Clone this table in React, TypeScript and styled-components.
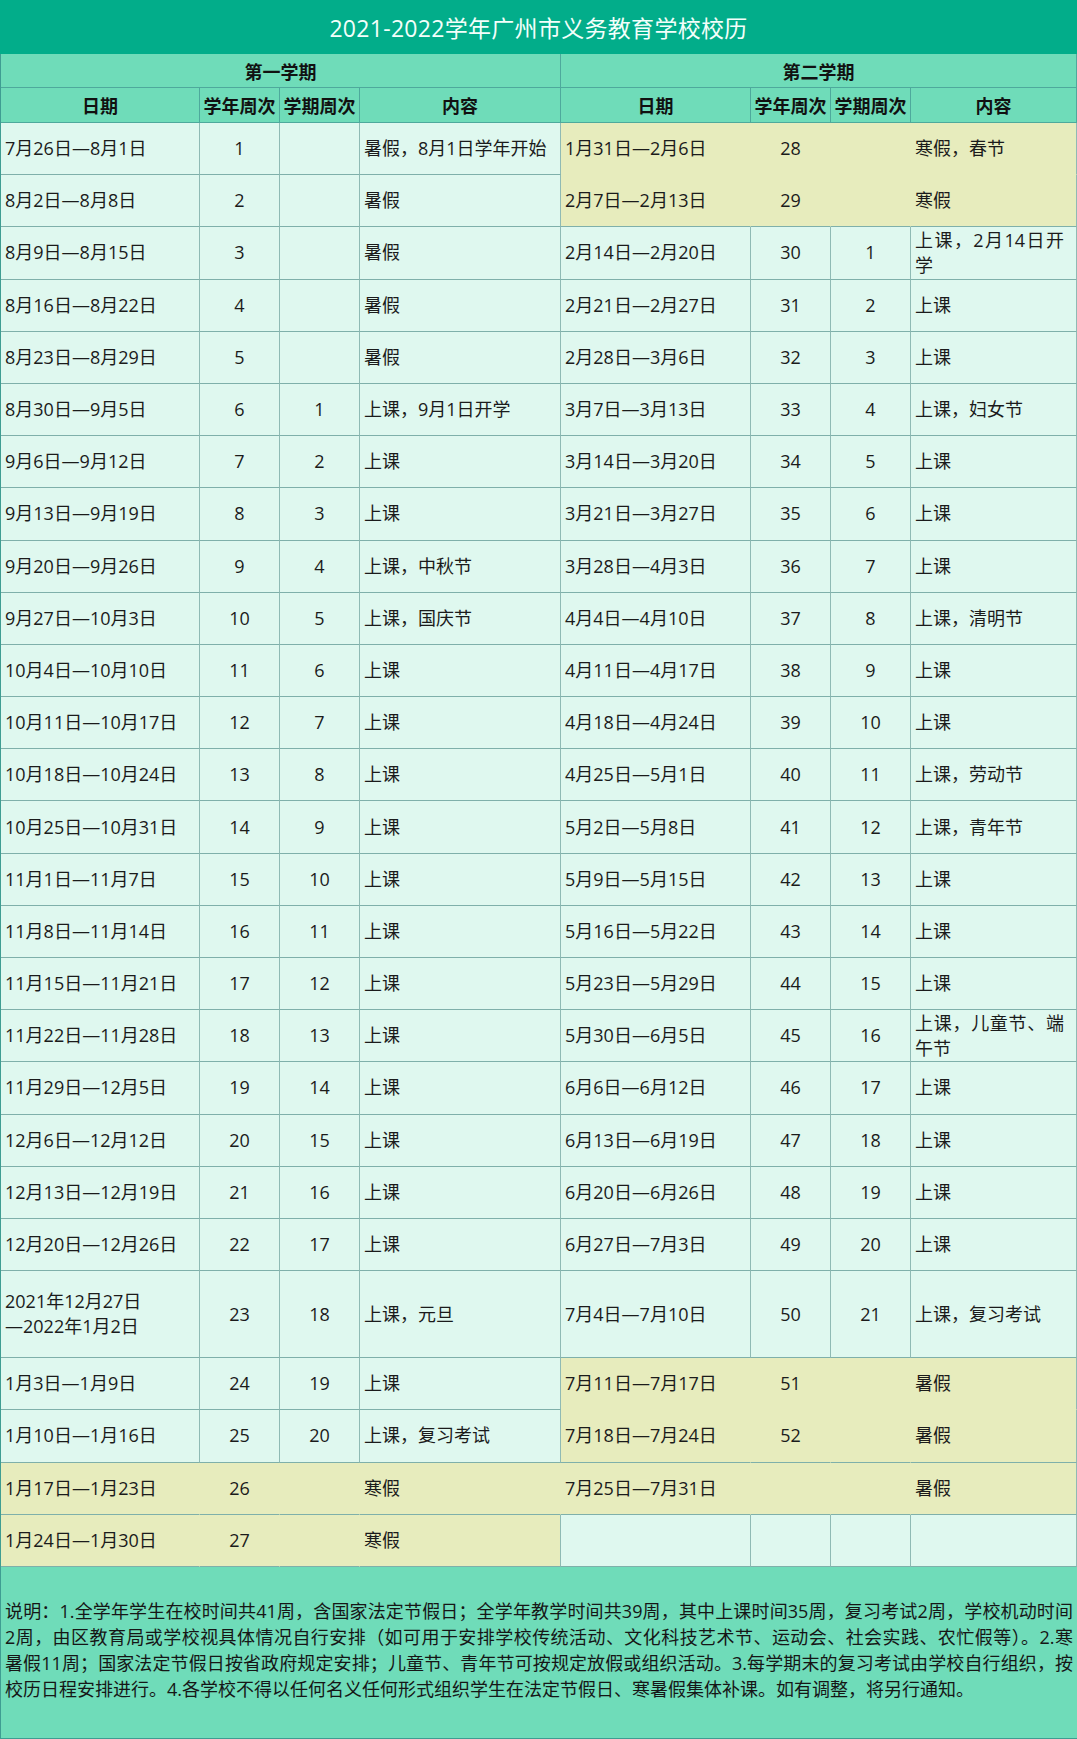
import styled, { createGlobalStyle } from "styled-components";

const GlobalStyle = createGlobalStyle`
  body {
    margin: 0;
    background: #ffffff;
    font-family: "Open Sans", "Noto Sans CJK SC", sans-serif;
    color: #1b1b1b;
  }
`;

// 8 columns, left border of the table takes 1px
const COLS = "199px 80px 80px 201px 190px 80px 80px 166px";

type Half = {
  date: string;
  year?: number;
  term?: number;
  text: string;
  hol?: boolean;
  join?: boolean; // no line under it (yellow block goes on)
  empty?: boolean;
};

type Line = { left: Half; right: Half; tall?: boolean };

const Page = styled.div`
  width: 1077px;
`;

const Title = styled.div`
  height: 54px;
  display: flex;
  align-items: center;
  justify-content: center;
  background: #02ad8a;
  color: #f3fffb;
  font-size: 23px;
  letter-spacing: 0.3px;
`;

const Table = styled.div`
  border-left: 1px solid #3f9d92;
`;

const Row = styled.div<{ $h: number }>`
  display: grid;
  grid-template-columns: ${COLS};
  height: ${(p) => p.$h}px;
`;

const HeadCell = styled.div<{ $span?: number }>`
  grid-column: span ${(p) => p.$span || 1};
  box-sizing: border-box;
  display: flex;
  align-items: center;
  justify-content: center;
  background: #6fdcb9;
  border-right: 1px solid #4ea99c;
  border-bottom: 1px solid #4ea99c;
  font-family: "Noto Sans CJK SC", sans-serif;
  font-size: 18px;
  font-weight: 700;
  color: #111;
  white-space: nowrap;
`;

const Cell = styled.div<{
  $align: "left" | "center";
  $hol?: boolean;
  $right: boolean;
  $bottom: boolean;
  $pr?: number;
}>`
  box-sizing: border-box;
  display: flex;
  align-items: center;
  justify-content: ${(p) => (p.$align === "center" ? "center" : "flex-start")};
  padding: 0 ${(p) => p.$pr ?? 4}px 0 4px;
  background: ${(p) => (p.$hol ? "#e7ecbd" : "#dff8ef")};
  border-right: 1px solid ${(p) => (p.$right ? "#8fbab4" : "transparent")};
  border-bottom: 1px solid ${(p) => (p.$bottom ? "#7fb0aa" : "transparent")};
  font-size: 18px;
  line-height: 25px;
  color: #1b1b1b;
`;

const Text = styled.span`
  display: block;
  width: 100%;
  text-align: justify;
`;

const Footer = styled.div`
  height: 173px;
  box-sizing: border-box;
  display: flex;
  flex-direction: column;
  justify-content: center;
  padding: 0 4px 4px 4px;
  background: #6fdcb9;
  border-left: 1px solid #3f9d92;
  border-bottom: 2px solid #3f9d92;
  font-size: 18px;
  line-height: 26px;
  color: #161616;
`;

const NoteLine = styled.div<{ $last?: boolean }>`
  text-align: justify;
  text-align-last: ${(p) => (p.$last ? "left" : "justify")};
`;

const left: Half[] = [
  { date: "7月26日—8月1日", year: 1, text: "暑假，8月1日学年开始" },
  { date: "8月2日—8月8日", year: 2, text: "暑假" },
  { date: "8月9日—8月15日", year: 3, text: "暑假" },
  { date: "8月16日—8月22日", year: 4, text: "暑假" },
  { date: "8月23日—8月29日", year: 5, text: "暑假" },
  { date: "8月30日—9月5日", year: 6, term: 1, text: "上课，9月1日开学" },
  { date: "9月6日—9月12日", year: 7, term: 2, text: "上课" },
  { date: "9月13日—9月19日", year: 8, term: 3, text: "上课" },
  { date: "9月20日—9月26日", year: 9, term: 4, text: "上课，中秋节" },
  { date: "9月27日—10月3日", year: 10, term: 5, text: "上课，国庆节" },
  { date: "10月4日—10月10日", year: 11, term: 6, text: "上课" },
  { date: "10月11日—10月17日", year: 12, term: 7, text: "上课" },
  { date: "10月18日—10月24日", year: 13, term: 8, text: "上课" },
  { date: "10月25日—10月31日", year: 14, term: 9, text: "上课" },
  { date: "11月1日—11月7日", year: 15, term: 10, text: "上课" },
  { date: "11月8日—11月14日", year: 16, term: 11, text: "上课" },
  { date: "11月15日—11月21日", year: 17, term: 12, text: "上课" },
  { date: "11月22日—11月28日", year: 18, term: 13, text: "上课" },
  { date: "11月29日—12月5日", year: 19, term: 14, text: "上课" },
  { date: "12月6日—12月12日", year: 20, term: 15, text: "上课" },
  { date: "12月13日—12月19日", year: 21, term: 16, text: "上课" },
  { date: "12月20日—12月26日", year: 22, term: 17, text: "上课" },
  { date: "2021年12月27日\n—2022年1月2日", year: 23, term: 18, text: "上课，元旦" },
  { date: "1月3日—1月9日", year: 24, term: 19, text: "上课" },
  { date: "1月10日—1月16日", year: 25, term: 20, text: "上课，复习考试" },
  { date: "1月17日—1月23日", year: 26, text: "寒假", hol: true },
  { date: "1月24日—1月30日", year: 27, text: "寒假", hol: true },
];

const right: Half[] = [
  { date: "1月31日—2月6日", year: 28, text: "寒假，春节", hol: true, join: true },
  { date: "2月7日—2月13日", year: 29, text: "寒假", hol: true },
  { date: "2月14日—2月20日", year: 30, term: 1, text: "上课，2月14日开学" },
  { date: "2月21日—2月27日", year: 31, term: 2, text: "上课" },
  { date: "2月28日—3月6日", year: 32, term: 3, text: "上课" },
  { date: "3月7日—3月13日", year: 33, term: 4, text: "上课，妇女节" },
  { date: "3月14日—3月20日", year: 34, term: 5, text: "上课" },
  { date: "3月21日—3月27日", year: 35, term: 6, text: "上课" },
  { date: "3月28日—4月3日", year: 36, term: 7, text: "上课" },
  { date: "4月4日—4月10日", year: 37, term: 8, text: "上课，清明节" },
  { date: "4月11日—4月17日", year: 38, term: 9, text: "上课" },
  { date: "4月18日—4月24日", year: 39, term: 10, text: "上课" },
  { date: "4月25日—5月1日", year: 40, term: 11, text: "上课，劳动节" },
  { date: "5月2日—5月8日", year: 41, term: 12, text: "上课，青年节" },
  { date: "5月9日—5月15日", year: 42, term: 13, text: "上课" },
  { date: "5月16日—5月22日", year: 43, term: 14, text: "上课" },
  { date: "5月23日—5月29日", year: 44, term: 15, text: "上课" },
  { date: "5月30日—6月5日", year: 45, term: 16, text: "上课，儿童节、端午节" },
  { date: "6月6日—6月12日", year: 46, term: 17, text: "上课" },
  { date: "6月13日—6月19日", year: 47, term: 18, text: "上课" },
  { date: "6月20日—6月26日", year: 48, term: 19, text: "上课" },
  { date: "6月27日—7月3日", year: 49, term: 20, text: "上课" },
  { date: "7月4日—7月10日", year: 50, term: 21, text: "上课，复习考试" },
  { date: "7月11日—7月17日", year: 51, text: "暑假", hol: true, join: true },
  { date: "7月18日—7月24日", year: 52, text: "暑假", hol: true },
  { date: "7月25日—7月31日", text: "暑假", hol: true },
  { date: "", text: "", empty: true },
];

const lines: Line[] = left.map((l, i) => ({ left: l, right: right[i], tall: i === 22 }));

// note split the way the printed sheet wraps it
const NOTE = [
  "说明：1.全学年学生在校时间共41周，含国家法定节假日；全学年教学时间共39周，其中上课时间35周，复习考试2周，学校机动时间",
  "2周，由区教育局或学校视具体情况自行安排（如可用于安排学校传统活动、文化科技艺术节、运动会、社会实践、农忙假等）。2.寒",
  "暑假11周；国家法定节假日按省政府规定安排；儿童节、青年节可按规定放假或组织活动。3.每学期末的复习考试由学校自行组织，按",
  "校历日程安排进行。4.各学校不得以任何名义任何形式组织学生在法定节假日、寒暑假集体补课。如有调整，将另行通知。",
];

function HalfCells({ h, edge }: { h: Half; edge: boolean }) {
  const hol = !!h.hol;
  const bottom = !h.join;
  const [d1, d2] = h.date.split("\n");
  return (
    <>
      <Cell $align="left" $hol={hol} $right={!hol} $bottom={bottom}>
        <span>
          {d1}
          {d2 && <br />}
          {d2}
        </span>
      </Cell>
      <Cell $align="center" $hol={hol} $right={!hol} $bottom={bottom}>
        {h.year}
      </Cell>
      <Cell $align="center" $hol={hol} $right={!hol} $bottom={bottom}>
        {h.term}
      </Cell>
      <Cell $align="left" $hol={hol} $right={!hol || edge} $bottom={bottom} $pr={12}>
        <Text>{h.text}</Text>
      </Cell>
    </>
  );
}

export default function App() {
  return (
    <Page>
      <GlobalStyle />
      <Title>2021-2022学年广州市义务教育学校校历</Title>
      <Table>
        <Row $h={34}>
          <HeadCell $span={4}>第一学期</HeadCell>
          <HeadCell $span={4}>第二学期</HeadCell>
        </Row>
        <Row $h={35}>
          <HeadCell>日期</HeadCell>
          <HeadCell>学年周次</HeadCell>
          <HeadCell>学期周次</HeadCell>
          <HeadCell>内容</HeadCell>
          <HeadCell>日期</HeadCell>
          <HeadCell>学年周次</HeadCell>
          <HeadCell>学期周次</HeadCell>
          <HeadCell>内容</HeadCell>
        </Row>
        {lines.map((ln, i) => (
          <Row key={i} $h={ln.tall ? 87 : 52.2}>
            <HalfCells h={ln.left} edge={!(ln.left.hol && ln.right.hol)} />
            <HalfCells h={ln.right} edge={true} />
          </Row>
        ))}
      </Table>
      <Footer>
        {NOTE.map((t, i) => (
          <NoteLine key={i} $last={i === NOTE.length - 1}>
            {t}
          </NoteLine>
        ))}
      </Footer>
    </Page>
  );
}
